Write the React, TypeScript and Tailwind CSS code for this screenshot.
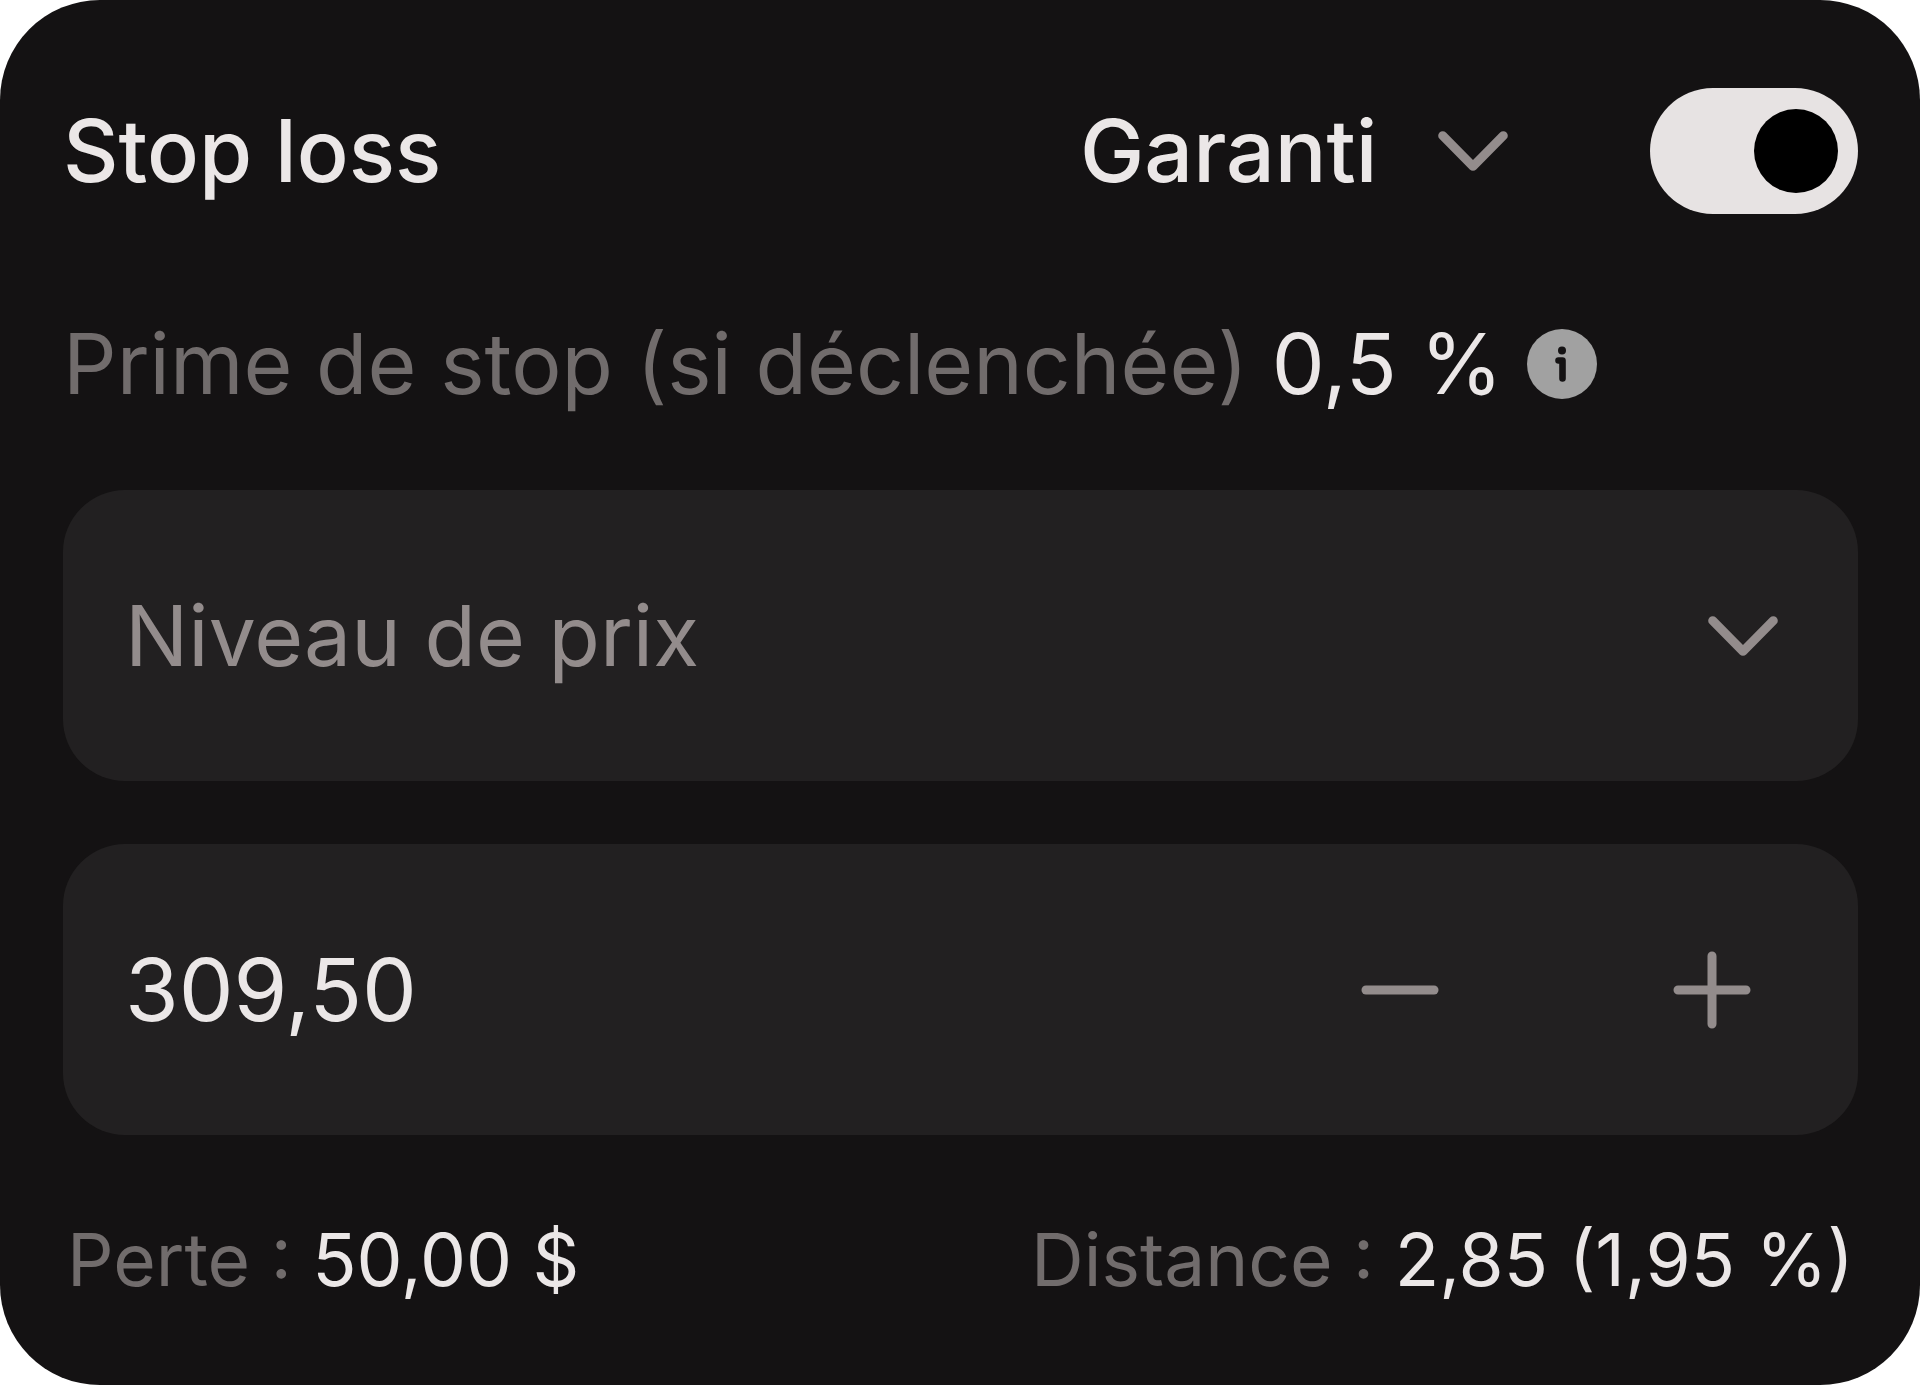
import { useState } from 'react'

function Chevron() {
  return (
    <svg
      viewBox="0 0 70 40"
      className="pointer-events-none col-start-1 row-start-1 h-10 w-[70px] self-center justify-self-end"
      fill="none"
      stroke="#938c8c"
      strokeWidth="9"
      strokeLinecap="round"
      strokeLinejoin="round"
      aria-hidden="true"
    >
      <path d="M4.7 4.7 35 35.3 65.3 4.7" />
    </svg>
  )
}

function InfoIcon() {
  return (
    <svg viewBox="0 0 70 70" className="size-[70px]" aria-hidden="true">
      <circle cx="35" cy="35" r="35" fill="#a1a1a1" />
      <circle cx="35" cy="21.5" r="4" fill="#141213" />
      <path
        d="M31.5 31.5H35.5V49.5"
        fill="none"
        stroke="#141213"
        strokeWidth="6.6"
        strokeLinecap="round"
        strokeLinejoin="round"
      />
    </svg>
  )
}

const formatPrice = (value: number) => value.toFixed(2).replace('.', ',')

export default function App() {
  const [enabled, setEnabled] = useState(true)
  const [stopType, setStopType] = useState('Garanti')
  const [mode, setMode] = useState('Niveau de prix')
  const [price, setPrice] = useState('309,50')

  const step = (delta: number) => {
    const current = Number(price.replace(',', '.')) || 0
    setPrice(formatPrice(current + delta))
  }

  return (
    <main className="flex flex-col rounded-[100px] bg-[#141213] pt-[88px] pr-[62px] pb-20 pl-[63px] font-['Inter','Liberation_Sans',sans-serif] text-[84px] leading-[100px] text-[#ebe7e7]">
      <header className="flex items-center justify-between text-[86px]">
        <label htmlFor="stop-enabled" className="font-medium">
          Stop loss
        </label>
        <div className="flex items-center gap-[142px]">
          <div className="grid">
            <select
              aria-label="Type de stop"
              value={stopType}
              onChange={(e) => setStopType(e.target.value)}
              className="col-start-1 row-start-1 h-[126px] w-[428px] appearance-none bg-transparent font-medium outline-none"
            >
              <option>Garanti</option>
              <option>Normal</option>
              <option>Suiveur</option>
            </select>
            <Chevron />
          </div>
          <input
            id="stop-enabled"
            type="checkbox"
            role="switch"
            checked={enabled}
            onChange={(e) => setEnabled(e.target.checked)}
            className="flex h-[126px] w-[208px] appearance-none items-center rounded-full bg-[#716c6c] px-5 before:size-[84px] before:rounded-full before:bg-black before:content-[''] checked:justify-end checked:bg-[#e7e3e3]"
          />
        </div>
      </header>

      <div className="mt-[100px] flex items-center gap-6">
        <p>
          <span className="text-[#716c6c]">Prime de stop (si déclenchée)</span> 0,5 %
        </p>
        <button type="button" aria-label="Informations sur la prime">
          <InfoIcon />
        </button>
      </div>

      <div className="mt-[76px] grid items-center rounded-[62px] bg-[#222021] pr-20">
        <select
          aria-label="Mode de saisie"
          value={mode}
          onChange={(e) => setMode(e.target.value)}
          className="col-start-1 row-start-1 h-[291px] w-full appearance-none rounded-[62px] bg-transparent pl-[62px] text-[#938c8c] outline-none"
        >
          <option>Niveau de prix</option>
          <option>Distance</option>
          <option>Montant</option>
        </select>
        <Chevron />
      </div>

      <div className="mt-[63px] flex h-[291px] items-center rounded-[62px] bg-[#222021] pr-[107px] pl-[62px]">
        <input
          type="text"
          inputMode="decimal"
          aria-label="Niveau de prix du stop"
          value={price}
          onChange={(e) => setPrice(e.target.value)}
          className="min-w-0 flex-1 bg-transparent text-[87px] outline-none"
        />
        <div className="flex gap-[234px]">
          <button type="button" aria-label="Diminuer" onClick={() => step(-0.5)}>
            <svg viewBox="0 0 78 78" className="size-[78px]" stroke="#938c8c" strokeWidth="9" strokeLinecap="round">
              <path d="M5 39H73" />
            </svg>
          </button>
          <button type="button" aria-label="Augmenter" onClick={() => step(0.5)}>
            <svg viewBox="0 0 78 78" className="size-[78px]" stroke="#938c8c" strokeWidth="9" strokeLinecap="round">
              <path d="M5 39H73M39 5V73" />
            </svg>
          </button>
        </div>
      </div>

      <footer className="mt-20 flex justify-between px-1 text-[73px] leading-[90px]">
        <p>
          <span className="text-[#716c6c]">Perte :</span> 50,00 $
        </p>
        <p>
          <span className="text-[#716c6c]">Distance :</span> 2,85 (1,95 %)
        </p>
      </footer>
    </main>
  )
}
